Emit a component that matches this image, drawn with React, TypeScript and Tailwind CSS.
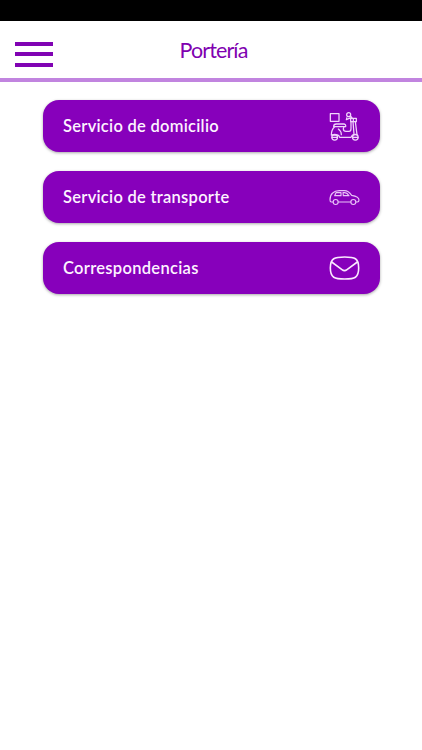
import type { ReactNode } from "react";

const ScooterIcon = () => (
    <svg viewBox="0 0 99 99" className="h-[33px] w-[33px]" fill="none" stroke="#f0d5fb" strokeWidth="3.8" strokeLinejoin="round" strokeLinecap="round">
        <path d="M7 11h26v23H7z" />
        <circle cx="62" cy="14" r="6" />
        <path d="M67 18l5 5M55 29l14-6M56 28v-4M68 25h17v10H68zM76 25v10" />
        <path d="M17 50c0-5 3-8 8-8h22c4 0 7 3 6 8H17z" />
        <path d="M48 50l-2 6c0 5 3 8 8 8h9c4 0 6-3 6-8V35" />
        <path d="M19 51c-6 6-9 14-9 24h18c4 0 6 3 7 7h34c1-4 4-8 9-9l-3-38M82 35l5 39M31 57c6 4 9 9 9 17" />
        <circle cx="20" cy="82" r="8.5" />
        <circle cx="82" cy="82" r="8.5" />
        <path d="M12 82h16M74 82h16" />
    </svg>
)

const CarIcon = () => (
    <svg viewBox="0 0 99 66" className="h-[22px] w-[33px]" fill="none" stroke="#e9c3f8" strokeWidth="3.4" strokeLinejoin="round" strokeLinecap="round">
        <path d="M15 48h-5c-3 0-4-3-4-6 0-9 2-16 8-21 5-5 12-7 20-7h15c9 0 15 4 22 14 13 2 22 5 22 14 0 4-2 6-5 6h-4M31 48h37" />
        <circle cx="23" cy="48" r="7.5" />
        <circle cx="76" cy="48" r="7.5" />
        <path d="M24 20h15v9H20zM45 20h5c6 0 10 4 13 9H46z" />
    </svg>
)

const MailIcon = () => (
    <svg viewBox="0 0 99 84" className="h-[28px] w-[33px]" fill="none" stroke="#fbeaff" strokeWidth="4.8" strokeLinejoin="round" strokeLinecap="round">
        <path d="M50 9c30 0 42 3 42 33s-12 33-42 33S7 72 7 42 20 9 50 9z" />
        <path d="M11 24l31 23c5 4 10 4 15 0l31-23" />
    </svg>
)

const MenuCard = ({ children, icon } : {
    children: ReactNode,
    icon: ReactNode
}) => {
    return (
        <button className="flex h-[52px] w-full items-center justify-between rounded-[16px] bg-[#8700bb] pl-[20.5px] pr-[18.5px] text-left text-[16.5px] font-semibold leading-[24px] text-[#fdf3ff] shadow-[0_1px_3px_rgba(0,0,0,0.35)]">
            {children}
            {icon}
        </button>
    )
}

const App = () => {
    return (
        <div className="min-h-screen bg-white font-['Lato',sans-serif]">
            <div className="h-[20.5px] bg-black" />
            <header className="relative flex h-[61px] items-start justify-center border-b-4 border-[#c184df]">
                <button aria-label="Menú" className="absolute left-[15px] top-[21px] flex w-[38px] flex-col gap-[6.5px]">
                    <span className="h-[4px] bg-[#8003b3]" />
                    <span className="h-[4px] bg-[#8003b3]" />
                    <span className="h-[4px] bg-[#8003b3]" />
                </button>
                <h1 className="mt-[14px] pl-[5px] text-[21.5px] leading-[30px] tracking-[-0.9px] text-[#8000b0]">Portería</h1>
            </header>
            <main className="flex flex-col gap-[19px] px-[42.5px] pt-[18.5px]">
                <MenuCard icon={<ScooterIcon />}>
                    <span className="tracking-[0.27px]">Servicio de domicilio</span>
                </MenuCard>
                <MenuCard icon={<CarIcon />}>
                    <span className="tracking-[0.27px]">Servicio de transporte</span>
                </MenuCard>
                <MenuCard icon={<MailIcon />}>
                    <span className="tracking-[0.3px]">Correspondencias</span>
                </MenuCard>
            </main>
        </div>
    )
}

export default App;
